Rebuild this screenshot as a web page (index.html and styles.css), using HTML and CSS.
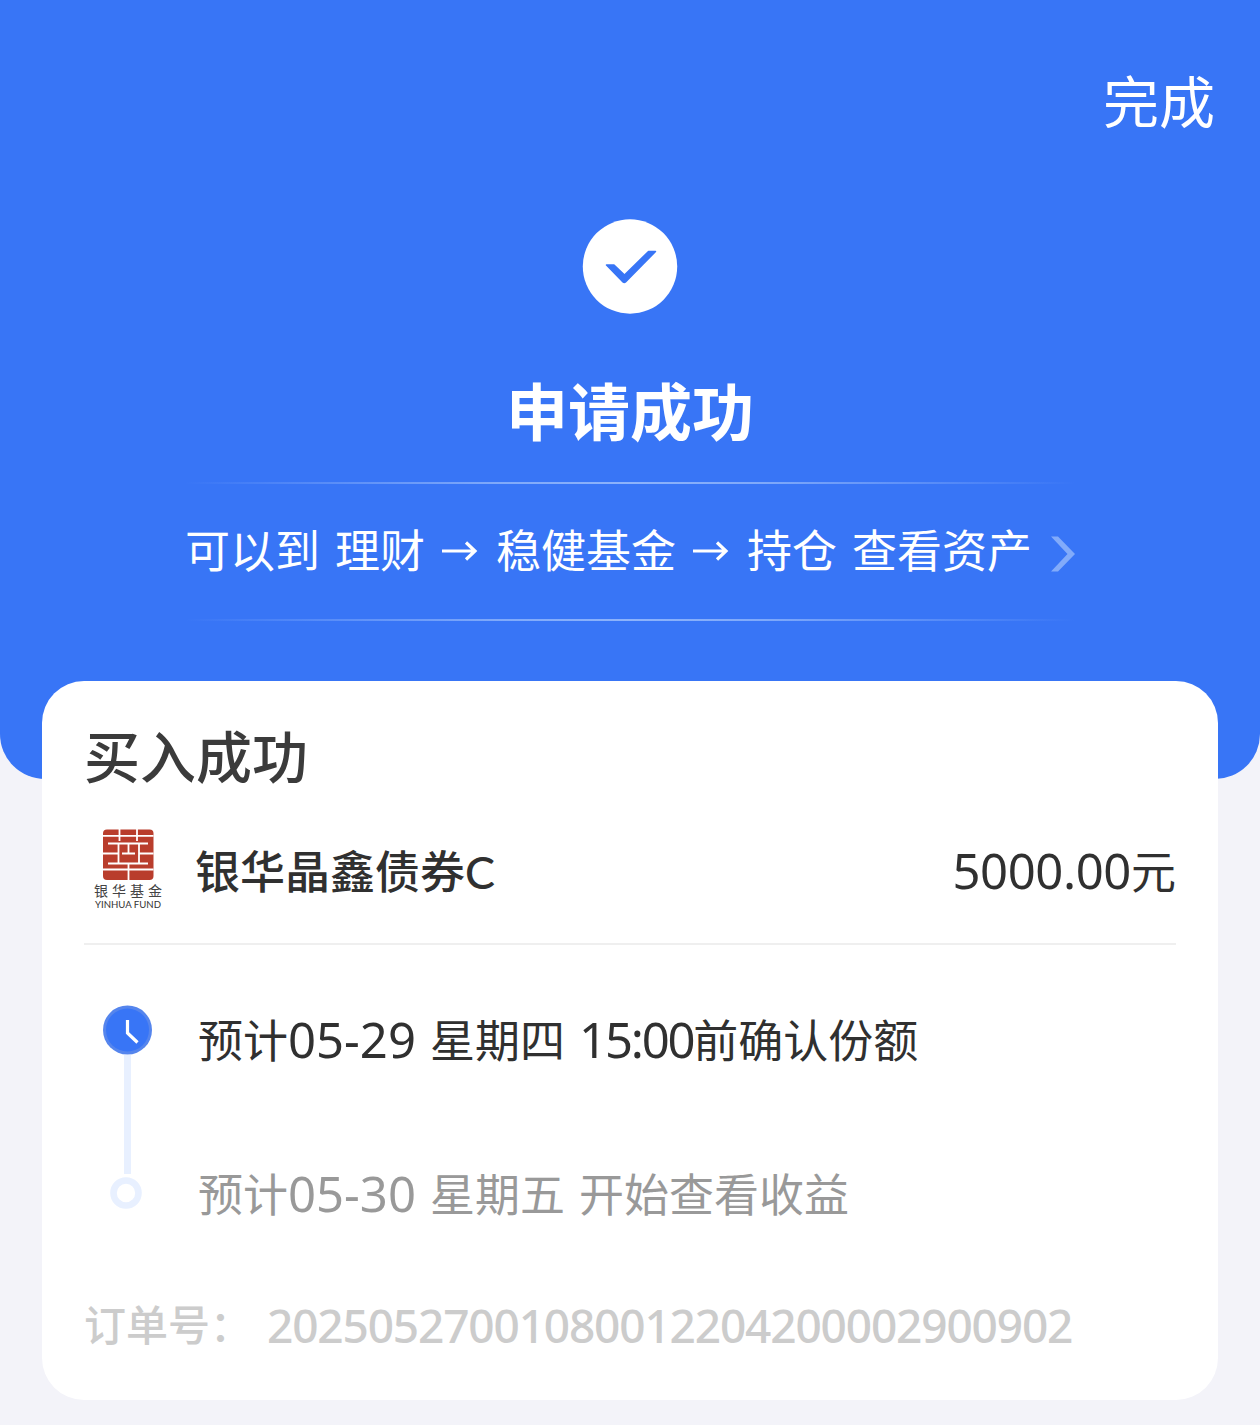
FILE: index.html
```
<!DOCTYPE html>
<html lang="zh-CN">
<head>
  <meta charset="UTF-8">
  <title>申请成功</title>
  <link rel="stylesheet" href="styles.css">
</head>
<body>
  <header class="header">
    <div class="topbar"><a class="done">完成</a></div>
    <svg class="check" width="96" height="96" viewBox="0 0 96 96">
      <circle cx="48" cy="48.500" r="47.200" fill="#fff"/>
      <path d="M24.500 47H32L42.500 57L66.500 33.500H73.500L43.500 64Q42.300 65 41 64Z" fill="#3875f6" stroke="#3875f6" stroke-width="1.500" stroke-linejoin="round"/>
    </svg>
    <h1 class="title">申请成功</h1>
    <div class="guide">
      <span class="path-text"><span>可以到</span><span>理财</span><svg class="arrow" width="36" height="24" viewBox="0 0 36 24"><path d="M0 12H33M24 3.5L33 12L24 20.5" fill="none" stroke="#fff" stroke-width="3.2"/></svg><span>稳健基金</span><svg class="arrow" width="36" height="24" viewBox="0 0 36 24"><path d="M0 12H33M24 3.5L33 12L24 20.5" fill="none" stroke="#fff" stroke-width="3.2"/></svg><span>持仓</span><span>查看资产</span></span>
      <svg class="chevron" width="26" height="36" viewBox="0 0 26 36"><path d="M2 .5H9L26 18L9 35.5H2L18.500 18Z" fill="#82abfa"/></svg>
    </div>
  </header>

  <main class="card">
    <h2 class="card-title">买入成功</h2>
    <div class="fund">
      <svg class="logo" width="76" height="84" viewBox="0 0 76 84">
        <rect x="11" y="2.500" width="50.500" height="50.500" rx="4" fill="#b93d2c"/>
        <g fill="none" stroke="#fff" stroke-width="1.800">
          <path d="M11 8.800H61.500M27.500 2V14M45 2V14"/>
          <path d="M16 16.500H56M26.500 16.500V36.500M47 16.500V36.500M16 36.500H56M36.500 16V27"/>
          <path d="M11 26.500H26M30 26.500H43M47 26.500H61.500M11 42.500H61.500M36.500 37V53"/>
        </g>
        <text class="logo-cn" x="2" y="69" textLength="68">银华基金</text>
        <text class="logo-en" x="3" y="81" textLength="66" lengthAdjust="spacingAndGlyphs">YINHUA FUND</text>
      </svg>
      <span class="fund-name">银华晶鑫债券<span class="latin">C</span></span>
      <span class="amount"><span class="num">5000.00</span>元</span>
    </div>

    <div class="steps">
      <svg class="rail" width="50" height="206" viewBox="0 0 50 206">
        <path d="M24.500 50V169" stroke="#e8f0ff" stroke-width="7"/>
        <circle cx="24.500" cy="25" r="24.500" fill="#5585ed"/>
        <circle cx="24.500" cy="25" r="21.500" fill="#3875f6"/>
        <path d="M24.500 15V28L34.500 37.500" fill="none" stroke="#fff" stroke-width="3.200"/>
        <circle cx="23" cy="188" r="12.500" fill="none" stroke="#e8f0ff" stroke-width="6.600"/>
      </svg>
      <div class="step-list">
        <p class="step">预计<span class="num">05-29</span> 星期四 <span class="num time">15:00</span>前确认份额</p>
        <p class="step pending">预计<span class="num">05-30</span> 星期五 开始查看收益</p>
      </div>
    </div>

    <div class="order">
      <span>订单号：</span>
      <span class="order-no">20250527001080012204200002900902</span>
    </div>
  </main>
</body>
</html>
```
FILE: styles.css
```
* {
  box-sizing: border-box;
}
body {
  margin: 0;
  background-color: #f3f3f9;
  color: #303030;
  font-family: "Noto Sans CJK SC", sans-serif;
  font-size: 45px;
}
h1, h2, p {
  margin: 0;
}
svg {
  display: block;
}
.header {
  height: 779px;
  display: flex;
  flex-direction: column;
  align-items: center;
  background-color: #3875f6;
  border-radius: 0 0 45px 45px;
  color: #fff;
}
.topbar {
  width: 100%;
  padding: 69px 45px 0 0;
  text-align: right;
}
.done {
  display: block;
  font-size: 56px;
  line-height: 60px;
}
.check {
  margin-top: 89px;
}
.title {
  margin-top: 60px;
  font-size: 62px;
  line-height: 70px;
  font-weight: 700;
}
.guide {
  width: 890px;
  height: 139px;
  margin-top: 38px;
  display: flex;
  align-items: center;
  justify-content: space-between;
  background-image: linear-gradient(90deg, transparent, #7fa9fa 35%, #8db3fb 50%, #7fa9fa 65%, transparent), linear-gradient(90deg, transparent, #7fa9fa 35%, #8db3fb 50%, #7fa9fa 65%, transparent);
  background-size: 100% 2px;
  background-position: top, bottom;
  background-repeat: no-repeat;
}
.path-text {
  display: flex;
  align-items: center;
  line-height: 60px;
  padding-bottom: 6px;
  gap: 15px;
}
.arrow {
  margin: 5px 3px 0 2px;
}
.chevron {
  margin-top: 5px;
}
.card {
  width: 1176px;
  height: 719px;
  margin: -98px auto 0;
  padding: 38px 42px 0;
  background-color: #fff;
  border-radius: 42px;
}
.card-title {
  font-size: 56px;
  line-height: 70px;
  font-weight: 500;
  color: #3b3b3b;
}
.fund {
  height: 156px;
  display: flex;
  align-items: flex-start;
  border-bottom: 2px solid #efefef;
}
.logo {
  margin: 38px 27px 0 8px;
}
.logo-cn {
  font-size: 14px;
  fill: #444;
}
.logo-en {
  font-family: Lato, sans-serif;
  font-size: 9px;
  fill: #333;
}
.fund-name,
.amount {
  margin-top: 51px;
  line-height: 60px;
}
.fund-name {
  font-weight: 500;
}
.amount {
  margin-left: auto;
}
.amount .num {
  letter-spacing: -0.4px;
}
.latin {
  font-family: Lato, sans-serif;
  line-height: 1;
}
.num {
  font-family: "Noto Sans", sans-serif;
  font-size: 49px;
  line-height: 1;
}
.time {
  letter-spacing: -2.2px;
}
.steps {
  display: flex;
  padding: 60px 0 0 19px;
}
.step-list {
  margin: 4px 0 0 45px;
}
.step {
  line-height: 60px;
  word-spacing: 4px;
}
.pending {
  margin-top: 94px;
  color: #999;
}
.order {
  display: flex;
  margin-top: 70px;
  line-height: 60px;
  font-size: 42px;
  font-weight: 500;
  color: #ccc;
}
.order-no {
  margin: 2px 0 0 15px;
  font-family: "Noto Sans", sans-serif;
  font-size: 46px;
  line-height: 60px;
  letter-spacing: -1.15px;
}
```
